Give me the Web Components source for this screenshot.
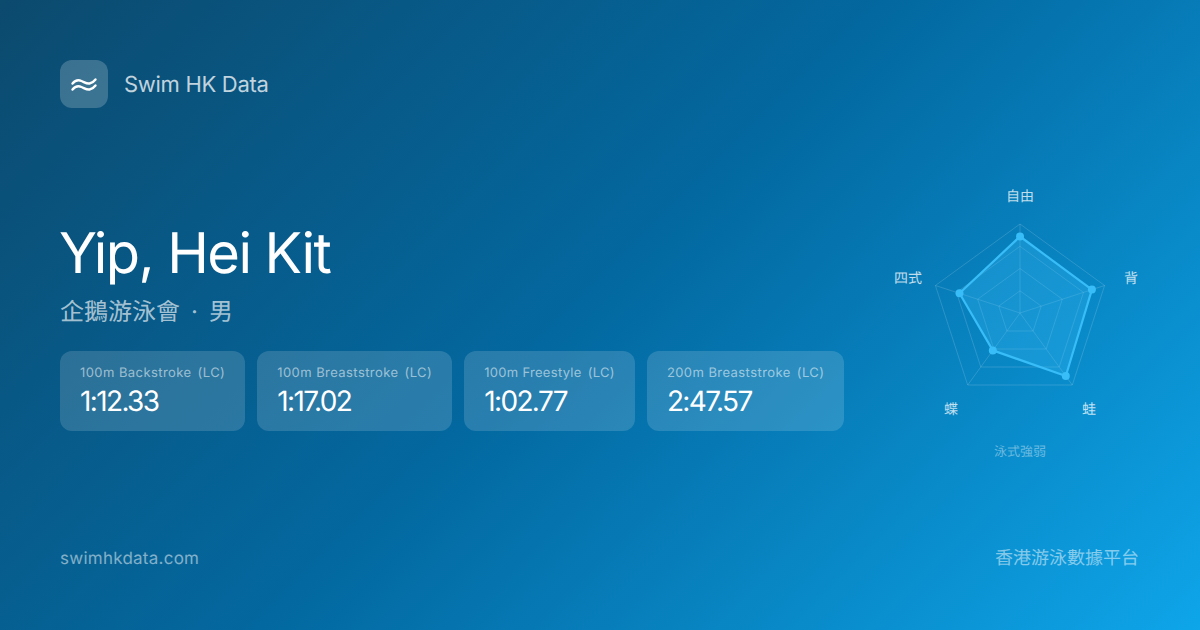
<!DOCTYPE html>
<html lang="zh-HK"><head><meta charset="utf-8"><title>Swim HK Data</title>
<style>html,body{margin:0;padding:0;width:1200px;height:630px;overflow:hidden}</style></head>
<body>
<og-card>
  <og-brand slot="head">Swim HK Data</og-brand>
  <og-athlete slot="left" name="Yip, Hei Kit" club="企鵝游泳會" gender="男">
    <og-stat label="100m Backstroke" course="(LC)" value="1:12.33"></og-stat>
    <og-stat label="100m Breaststroke" course="(LC)" value="1:17.02"></og-stat>
    <og-stat style="--track:.3px" label="100m Freestyle" course="(LC)" value="1:02.77"></og-stat>
    <og-stat label="200m Breaststroke" course="(LC)" value="2:47.57"></og-stat>
  </og-athlete>
  <og-radar slot="right"></og-radar>
  <span slot="foot-l">swimhkdata.com</span>
  <span slot="foot-r">香港游泳數據平台</span>
</og-card>
<script>
const FONT = `Inter,"Noto Sans CJK TC",sans-serif`;
function def(name, html){
  customElements.define(name, class extends HTMLElement{
    connectedCallback(){
      if(this.shadowRoot) return;
      const r=this.attachShadow({mode:'open'});
      r.innerHTML=typeof html==='function'?html(this):html;
    }
  });
}
def('og-card',`<style>
:host{display:flex;flex-direction:column;box-sizing:border-box;width:1200px;height:630px;padding:60px 61px 60px 60px;
background:linear-gradient(135deg,#0c4a6e 0%,#0369a1 50%,#0ea5e9 100%);font-family:${FONT};color:#fff;text-rendering:geometricPrecision}
main{flex:1;display:flex;align-items:center;justify-content:space-between;margin-right:-1px}
footer{display:flex;justify-content:space-between;align-items:center;font-size:18px;line-height:22px;color:rgba(255,255,255,.5)}
::slotted([slot=foot-l]){font-size:17px;letter-spacing:.25px}
</style>
<slot name="head"></slot>
<main><slot name="left"></slot><slot name="right"></slot></main>
<footer><slot name="foot-l"></slot><slot name="foot-r"></slot></footer>`);
def('og-brand',`<style>
:host{display:flex;align-items:center;gap:16px;font-size:22px;letter-spacing:-.3px;color:rgba(255,255,255,.75)}
.i{width:48px;height:48px;border-radius:12px;background:rgba(255,255,255,.2);display:flex;align-items:center;justify-content:center}
span{padding-top:2px}
</style>
<div class="i"><svg width="28" height="28" viewBox="0 0 28 28" fill="none" stroke="#fff" stroke-width="2.400" stroke-linecap="round" stroke-linejoin="round"><path d="M2.500 13.500C5 10.500 8 9.500 11.500 11S17 14 19.500 13.500S24 11.500 25.500 9.500"/><path d="M2.500 19.500C5 16.500 8 15.500 11.500 17S17 20 19.500 19.500S24 17.500 25.500 15.500"/></svg></div>
<span><slot></slot></span>`);
def('og-athlete',el=>`<style>
:host{display:flex;flex-direction:column;min-width:0}
h1{margin:0 0 0 -1px;font-size:56px;font-weight:400;line-height:54px;letter-spacing:-.028em;color:#fff}
p{margin:16px 0 23px;font-size:24px;line-height:32px;color:rgba(255,255,255,.65)}
p i{font-style:normal;padding:0 11px}
.row{display:flex;gap:12px}
</style><h1>${el.getAttribute('name')}</h1><p>${el.getAttribute('club')}<i>·</i>${el.getAttribute('gender')}</p><div class="row"><slot></slot></div>`);
def('og-stat',el=>`<style>
:host{display:flex;flex-direction:column;gap:2px;padding:13px 20px;border-radius:12px;background:rgba(255,255,255,.15)}
.l{font-size:13px;line-height:18px;letter-spacing:var(--track,.43px);color:rgba(255,255,255,.55);display:flex;gap:6px;white-space:nowrap}
.v{font-size:28px;line-height:34px;font-weight:400;letter-spacing:-.058em;color:#fff}
</style><div class="l"><span>${el.getAttribute('label')}</span><span>${el.getAttribute('course')}</span></div><div class="v">${el.getAttribute('value')}</div>`);
def('og-radar',()=>{
  const cx=120,cy=133,R=89;
  const pt=(i,r)=>{const a=(-90+72*i)*Math.PI/180;return [cx+r*Math.cos(a),cy+r*Math.sin(a)]};
  const poly=r=>[0,1,2,3,4].map(i=>pt(i,r).map(n=>n.toFixed(1)).join(',')).join(' ');
  let g='';
  for(const f of [.25,.5,.75,1]) g+=`<polygon points="${poly(R*f)}" fill="none" stroke="rgba(255,255,255,.15)" stroke-width="1"/>`;
  for(let i=0;i<5;i++){const p=pt(i,R);g+=`<line x1="${cx}" y1="${cy}" x2="${p[0].toFixed(1)}" y2="${p[1].toFixed(1)}" stroke="rgba(255,255,255,.15)" stroke-width="1"/>`}
  const v=[.86,.85,.875,.52,.715];
  const d=v.map((f,i)=>pt(i,R*f));
  const ds=d.map(p=>p.map(n=>n.toFixed(1)).join(',')).join(' ');
  g+=`<polygon points="${ds}" fill="rgba(56,189,248,.3)" stroke="#38bdf8" stroke-width="2.200" stroke-linejoin="round"/>`;
  d.forEach(p=>g+=`<circle cx="${p[0].toFixed(1)}" cy="${p[1].toFixed(1)}" r="4" fill="#38bdf8"/>`);
  const lab=[['自由',120,21,'middle'],['背',238,103,'end'],['蛙',189,234,'middle'],['蝶',51,234,'middle'],['四式',-6,103,'start']];
  lab.forEach(l=>g+=`<text x="${l[1]}" y="${l[2]}" text-anchor="${l[3]}" font-size="14" fill="rgba(255,255,255,.75)">${l[0]}</text>`);
  g+=`<text x="120" y="276" text-anchor="middle" font-size="13" fill="rgba(255,255,255,.4)">泳式強弱</text>`;
  return `<style>:host{display:block;width:240px;height:290px;margin-top:-6px}svg{display:block;overflow:visible}</style>
  <svg width="240" height="290" viewBox="0 0 240 290">${g}</svg>`;
});
</script>
</body></html>
